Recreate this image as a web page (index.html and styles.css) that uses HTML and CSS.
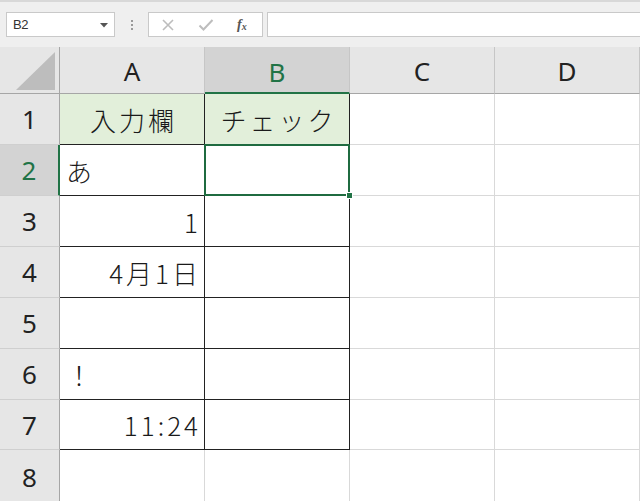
FILE: index.html
```html
<!DOCTYPE html>
<html lang="ja">
<head>
<meta charset="utf-8">
<title>Sheet</title>
<link rel="stylesheet" href="styles.css">
</head>
<body>
<div class="app">
  <div class="toolbar">
    <div class="namebox">
      <span class="nb-text">B2</span>
      <svg class="nb-arrow" width="8" height="5" viewBox="0 0 8 5"><path d="M0 0 H8 L4 4.5 Z" fill="#555"/></svg>
    </div>
    <div class="grip"><i></i><i></i><i></i></div>
    <div class="fx-box">
      <svg class="ic" width="14" height="14" viewBox="0 0 14 14"><path d="M2 2 L12 12 M12 2 L2 12" stroke="#bdbdbd" stroke-width="1.6" fill="none"/></svg>
      <svg class="ic" width="16" height="14" viewBox="0 0 16 14"><path d="M1.5 7.5 L5.5 11.5 L14.5 2" stroke="#bdbdbd" stroke-width="2" fill="none"/></svg>
      <span class="fx">f<sub>x</sub></span>
    </div>
    <div class="formula"></div>
  </div>

  <div class="sheet">
    <div class="corner"><svg width="40" height="39" viewBox="0 0 40 39"><path d="M0 38 L39 38 L39 0 Z" fill="#bdbdbd"/></svg></div>
    <div class="ch">A</div>
    <div class="ch ch-sel">B</div>
    <div class="ch">C</div>
    <div class="ch ch-last">D</div>

    <div class="rh">1</div>
    <div class="c t head center">入力欄</div>
    <div class="c t head center">チェック</div>
    <div class="c"></div>
    <div class="c"></div>

    <div class="rh rh-sel">2</div>
    <div class="c t left">あ</div>
    <div class="c t sel"><span class="handle"></span></div>
    <div class="c"></div>
    <div class="c"></div>

    <div class="rh">3</div>
    <div class="c t right num">1</div>
    <div class="c t"></div>
    <div class="c"></div>
    <div class="c"></div>

    <div class="rh">4</div>
    <div class="c t right num">4月1日</div>
    <div class="c t"></div>
    <div class="c"></div>
    <div class="c"></div>

    <div class="rh">5</div>
    <div class="c t"></div>
    <div class="c t"></div>
    <div class="c"></div>
    <div class="c"></div>

    <div class="rh">6</div>
    <div class="c t left">！</div>
    <div class="c t"></div>
    <div class="c"></div>
    <div class="c"></div>

    <div class="rh">7</div>
    <div class="c t right num">11:24</div>
    <div class="c t"></div>
    <div class="c"></div>
    <div class="c"></div>

    <div class="rh">8</div>
    <div class="c"></div>
    <div class="c"></div>
    <div class="c"></div>
    <div class="c"></div>
  </div>
</div>
</body>
</html>
```

FILE: styles.css
```css
* { box-sizing: border-box; }
html, body { margin: 0; padding: 0; background: #ffffff; }
body { width: 640px; height: 501px; overflow: hidden; font-family: "Noto Sans", "Noto Sans CJK JP", sans-serif; }

.app { display: flex; flex-direction: column; width: 640px; }

.toolbar {
  height: 47px;
  background: #efefef;
  border-top: 2px solid #d8d8d8;
  display: flex;
  align-items: flex-start;
  padding: 10px 0 0 6px;
}
.namebox {
  width: 109px; height: 25px;
  background: #fff;
  border: 1px solid #c9c9c9;
  display: flex; align-items: center; justify-content: space-between;
  padding: 0 6px 0 6px;
}
.nb-text { font-family: "Liberation Sans", sans-serif; font-size: 13px; color: #333; letter-spacing: -0.5px; }
.nb-arrow { margin-top: 1px; }
.grip {
  width: 33px; height: 25px;
  display: flex; flex-direction: column; align-items: center; justify-content: center; gap: 2px;
}
.grip i { display: block; width: 2px; height: 2px; background: #9a9a9a; }
.fx-box {
  width: 115px; height: 25px;
  background: #fff;
  border: 1px solid #c9c9c9;
  display: flex; align-items: center;
  padding-left: 12px; gap: 23px;
}
.fx { font-family: "Liberation Serif", serif; font-style: italic; font-size: 14px; color: #555; font-weight: bold; }
.fx sub { font-size: 10px; vertical-align: -1px; }
.formula {
  flex: 1; height: 25px; margin-left: 4px;
  background: #fff;
  border: 1px solid #c9c9c9; border-right: none;
}

.sheet {
  display: grid;
  grid-template-columns: 60px 145px 145px 145px 145px;
  grid-template-rows: 47px 51px 51px 51px 51px 51px 51px 50px 54px;
}
.corner {
  background: #e6e6e6;
  border-right: 1px solid #a6a6a6;
  border-bottom: 1px solid #a6a6a6;
  display: flex; align-items: flex-end; justify-content: flex-end;
  padding: 0 3px 2px 0;
}
.ch {
  background: #e6e6e6;
  border-right: 1px solid #c6c6c6;
  border-bottom: 1px solid #a6a6a6;
  display: flex; align-items: center; justify-content: center;
  font-size: 26px; color: #222;
  padding-top: 2px;
}
.ch-sel { background: #d3d3d3; color: #217346; border-bottom: 2px solid #217346; padding-top: 4px; }
.rh {
  background: #e6e6e6;
  border-right: 1px solid #a6a6a6;
  border-bottom: 1px solid #cfcfcf;
  display: flex; align-items: center; justify-content: center;
  font-size: 26px; color: #222;
}
.rh-sel { background: #d3d3d3; color: #217346; border-right: 2px solid #217346; }
.c {
  border-right: 1px solid #d9d9d9;
  border-bottom: 1px solid #d9d9d9;
  display: flex; align-items: center;
  font-family: "Noto Sans CJK JP", sans-serif;
  font-weight: 300;
  font-size: 26px; color: #1a1a1a;
}
.t { border-right-color: #222; border-bottom-color: #222; }
.head { background: #e2efda; letter-spacing: 3px; padding-left: 3px; }
.center { justify-content: center; }
.left { justify-content: flex-start; padding-left: 6px; }
.right { justify-content: flex-end; padding-right: 6px; }
.num { letter-spacing: 3px; padding-right: 3px; }
.sel { position: relative; }
.sel::after {
  content: "";
  position: absolute;
  top: -1px; left: -1px; right: -1px; bottom: -1px;
  border: 2px solid #1f6b40;
}
.handle {
  position: absolute;
  right: -4px; bottom: -4px;
  width: 7px; height: 7px;
  background: #217346;
  border: 1px solid #fff;
  z-index: 2;
}
```
